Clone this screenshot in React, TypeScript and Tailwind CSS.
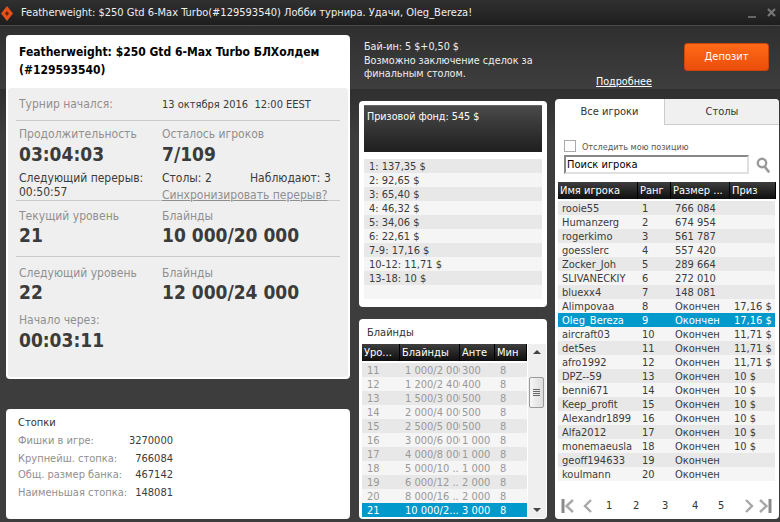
import React from "react";

const font = "font-['DejaVu_Sans_Condensed','DejaVu_Sans',sans-serif]";

const prizes = ["1: 137,35 $", "2: 92,65 $", "3: 65,40 $", "4: 46,32 $", "5: 34,06 $", "6: 22,61 $", "7-9: 17,16 $", "10-12: 11,71 $", "13-18: 10 $", ""];

const blinds = [
  ["11", "1 000/2 000", "300", "8"],
  ["12", "1 200/2 400", "400", "8"],
  ["13", "1 500/3 000", "500", "8"],
  ["14", "2 000/4 000", "500", "8"],
  ["15", "2 500/5 000", "500", "8"],
  ["16", "3 000/6 000", "1 000", "8"],
  ["17", "4 000/8 000", "1 000", "8"],
  ["18", "5 000/10 ..", "1 000", "8"],
  ["19", "6 000/12 ..", "2 000", "8"],
  ["20", "8 000/16 ..", "2 000", "8"],
  ["21", "10 000/2...", "3 000", "8"],
];

const players = [
  ["rooie55", "1", "766 084", ""],
  ["Humanzerg", "2", "674 954", ""],
  ["rogerkimo", "3", "561 787", ""],
  ["goesslerc", "4", "557 420", ""],
  ["Zocker_Joh", "5", "289 664", ""],
  ["SLIVANECKIY", "6", "272 010", ""],
  ["bluexx4", "7", "148 081", ""],
  ["Alimpovaa", "8", "Окончен", "17,16 $"],
  ["Oleg_Bereza", "9", "Окончен", "17,16 $"],
  ["aircraft03", "10", "Окончен", "11,71 $"],
  ["det5es", "11", "Окончен", "11,71 $"],
  ["afro1992", "12", "Окончен", "11,71 $"],
  ["DPZ--59", "13", "Окончен", "10 $"],
  ["benni671", "14", "Окончен", "10 $"],
  ["Keep_profit", "15", "Окончен", "10 $"],
  ["Alexandr1899", "16", "Окончен", "10 $"],
  ["Alfa2012", "17", "Окончен", "10 $"],
  ["monemaeusla", "18", "Окончен", "10 $"],
  ["geoff194633", "19", "Окончен", ""],
  ["koulmann", "20", "Окончен", ""],
];

const Head = ({ w, children }: { w: string; children: React.ReactNode }) => (
  <div className={`${w} shrink-0 h-full border-r border-black pl-[2px] overflow-hidden whitespace-nowrap leading-[18px] text-white`}>{children}</div>
);

const Hr = () => <div className="h-[1px] bg-[#cbcbcb] ml-[8px] mr-[3px]" />;

const Label = ({ children }: { children: React.ReactNode }) => (
  <div className="text-[12px] leading-[15px] text-[#908f8f]">{children}</div>
);

const Big = ({ children }: { children: React.ReactNode }) => (
  <div className="text-[19px] leading-[22px] font-bold text-[#3b3b3b]">{children}</div>
);

export default function App() {
  return (
    <div className={`${font} w-[780px] h-[522px] overflow-hidden bg-[#3d3d3d] flex flex-col text-[#3b3b3b]`}>
      <div className="h-[26px] shrink-0 bg-gradient-to-b from-[#303030] to-[#1e1e1e] border-b border-[#4a4a4a] flex items-center text-[11px] text-[#eeeeee]">
        <svg width="12" height="15" viewBox="0 0 12 15" className="ml-[1px] mr-[8px] mt-[2px]">
          <path d="M6 0 L12 7.5 L6 15 L0 7.5 Z" fill="#e8501a" />
          <path d="M6 5 L8 7.5 L6 10 L4 7.5 Z" fill="#5a2a14" />
        </svg>
        <span className="whitespace-nowrap mt-[2px]">Featherweight: $250 Gtd 6-Max Turbo(#129593540) Лобби турнира. Удачи, Oleg_Bereza!</span>
        <div className="ml-auto flex items-center gap-[11px] pr-[4px]">
          <div className="w-[8px] h-[2px] bg-[#666666] mt-[8px]" />
          <svg width="9" height="9" viewBox="0 0 9 9"><path d="M1 1 L8 8 M8 1 L1 8" stroke="#777777" strokeWidth="2.2" /></svg>
        </div>
      </div>

      <div className="flex-1 flex relative min-h-0 bg-[linear-gradient(to_bottom,#2f2f2f_0px,#3e3e3e_63px,#2f2f2f_63px,#3d3d3d_110px)]">
        <div className="w-[359px] shrink-0 pl-[6px] pt-[9px] flex flex-col">
          <div className="w-[344px] h-[344px] bg-white rounded-[4px] px-[2px] pb-[2px] flex flex-col">
            <div className="h-[53px] shrink-0 pl-[11px] pt-[8px] text-[12px] leading-[18px] font-bold text-black">
              Featherweight: $250 Gtd 6-Max Turbo БЛХолдем<br />(#129593540)
            </div>
            <div className="flex-1 bg-[#efefef] rounded-[3px] pr-[5px]">
              <div className="flex h-[32px] pl-[11px] pt-[9px]">
                <div className="w-[143px] text-[12px] leading-[15px] text-[#908f8f]">Турнир начался:</div>
                <div className="text-[11px] leading-[15px]">13 октября 2016&nbsp;&nbsp;12:00 EEST</div>
              </div>
              <Hr />
              <div className="flex h-[79px] pl-[11px] pt-[6px]">
                <div className="w-[143px]">
                  <Label>Продолжительность</Label>
                  <div className="mt-[1px]"><Big>03:04:03</Big></div>
                  <div className="text-[12px] leading-[15px] mt-[6px]">Следующий перерыв:</div>
                  <div className="text-[12px] leading-[13px]">00:50:57</div>
                </div>
                <div className="flex-1">
                  <Label>Осталось игроков</Label>
                  <div className="mt-[1px]"><Big>7/109</Big></div>
                  <div className="flex text-[12px] leading-[15px] mt-[6px]">
                    <div className="w-[88px]">Столы: 2</div>
                    <div>Наблюдают: 3</div>
                  </div>
                  <div className="text-[12px] leading-[14px] text-[#908f8f] underline mt-[2px]">Синхронизировать перерыв?</div>
                </div>
              </div>
              <Hr />
              <div className="flex h-[55px] pl-[11px] pt-[8px]">
                <div className="w-[143px]">
                  <Label>Текущий уровень</Label>
                  <Big>21</Big>
                </div>
                <div>
                  <Label>Блайнды</Label>
                  <Big>10 000/20 000</Big>
                </div>
              </div>
              <Hr />
              <div className="flex pl-[11px] pt-[9px]">
                <div className="w-[143px]">
                  <Label>Следующий уровень</Label>
                  <Big>22</Big>
                </div>
                <div>
                  <Label>Блайнды</Label>
                  <Big>12 000/24 000</Big>
                </div>
              </div>
              <div className="pl-[11px] pt-[10px]">
                <Label>Начало через:</Label>
                <div className="mt-[1px]"><Big>00:03:11</Big></div>
              </div>
            </div>
          </div>
          <div className="w-[344px] h-[110px] mt-[30px] bg-white rounded-[4px] pl-[12px] pt-[7px] text-[11px]">
            <div className="leading-[14px] text-[#333333]">Стопки</div>
            {[
              ["Фишки в игре:", "3270000", "mt-[3px]"],
              ["Крупнейш. стопка:", "766084", "mt-[3px]"],
              ["Общ. размер банка:", "467142", "mt-[1px]"],
              ["Наименьшая стопка:", "148081", "mt-[3px]"],
            ].map(([k, v, m]) => (
              <div key={k} className={`flex w-[155px] justify-between leading-[15px] ${m}`}>
                <span className="text-[#908f8f]">{k}</span>
                <span>{v}</span>
              </div>
            ))}
          </div>
        </div>

        <div className="w-[196px] shrink-0 flex flex-col">
          <div className="h-[63px] shrink-0 text-[10.7px] leading-[13.5px] text-[#eeeeee] pl-[5px] pt-[14px] w-[190px]">
            Бай-ин: 5 $+0,50 $<br />Возможно заключение сделок за финальным столом.
          </div>
          <div className="w-[188px] h-[206px] mt-[12px] bg-white rounded-[4px] px-[5px] pt-[4px] text-[11px]">
            <div className="h-[47px] bg-gradient-to-b from-[#4a4a4a] to-[#1f1f1f] border-t border-[#666666] pl-[3px] pt-[4px] leading-[14px] text-[10.7px] text-white">Призовой фонд: 545 $</div>
            <div className="mt-[7px]">
              {prizes.map((p, i) => (
                <div key={i} className={`h-[14px] leading-[15px] pl-[5px] ${i % 2 === 0 ? "bg-[#e8e8e8]" : "bg-[#f5f5f5]"}`}>{p}</div>
              ))}
            </div>
          </div>
          <div className="w-[188px] h-[200px] mt-[12px] bg-white rounded-[4px] text-[11px] flex flex-col">
            <div className="h-[25px] shrink-0 pl-[8px] pt-[7px] leading-[14px] text-[#333333]">Блайнды</div>
            <div className="flex flex-1 min-h-0">
              <div className="w-[165px] ml-[3px] shrink-0">
                <div className="h-[17px] flex bg-gradient-to-b from-[#3f3f3f] to-[#0f0f0f]">
                  <Head w="w-[38px]">Уро...</Head>
                  <Head w="w-[60px]">Блайнды</Head>
                  <Head w="w-[35px]">Анте</Head>
                  <Head w="w-[32px]">Мин</Head>
                </div>
                <div className="mt-[2px]">
                  {blinds.map((b, i) => (
                    <div key={b[0]} className={`h-[14px] leading-[15px] flex ${i === 10 ? "bg-[#0099cc] text-white" : `text-[#999999] ${i % 2 === 0 ? "bg-[#e8e8e8]" : "bg-[#f5f5f5]"}`}`}>
                      <div className="w-[38px] pl-[5px] shrink-0">{b[0]}</div>
                      <div className="w-[60px] pl-[5px] shrink-0 overflow-hidden whitespace-nowrap">{b[1]}</div>
                      <div className="w-[35px] pl-[2px] shrink-0 whitespace-nowrap">{b[2]}</div>
                      <div className="w-[32px] pl-[5px] shrink-0">{b[3]}</div>
                    </div>
                  ))}
                </div>
              </div>
              <div className="w-[18px] ml-[1px] mb-[1px] bg-[#efefef] relative flex flex-col items-center justify-between py-[6px]">
                <div className="w-0 h-0 border-x-[4px] border-x-transparent border-b-[4px] border-b-[#444444]" />
                <div className="absolute top-[33px] left-[1px] w-[15px] h-[31px] rounded-[2px] border border-[#9a9a9a] bg-gradient-to-r from-[#f6f6f6] to-[#dddddd] flex flex-col items-center justify-center gap-[1px]">
                  <div className="w-[7px] h-[1px] bg-[#666666]" />
                  <div className="w-[7px] h-[1px] bg-[#666666]" />
                  <div className="w-[7px] h-[1px] bg-[#666666]" />
                  <div className="w-[7px] h-[1px] bg-[#666666]" />
                </div>
                <div className="w-0 h-0 border-x-[4px] border-x-transparent border-t-[4px] border-t-[#444444]" />
              </div>
            </div>
          </div>
        </div>

        <div className="flex-1 flex flex-col pr-[3px]">
          <div className="h-[63px] shrink-0 flex relative text-[11px] text-[#eeeeee]">
            <a className="absolute left-[41px] top-[49px] leading-[13px] text-[10.7px] underline text-white">Подробнее</a>
            <button className="absolute left-[129px] top-[17px] w-[85px] h-[28px] rounded-[3px] border border-[#c9450c] bg-gradient-to-b from-[#ff6a16] to-[#ea4d0a] text-white text-[11px]">Депозит</button>
          </div>
          <div className="h-[420px] mt-[10px] bg-white rounded-[4px] text-[11px] flex flex-col">
            <div className="h-[26px] flex text-[11px] text-[#333333]">
              <div className="w-[110px] flex items-center justify-center border-r border-[#cccccc] pt-[1px]">Все игроки</div>
              <div className="flex-1 flex items-center justify-center bg-[#f0f0f0] border-b border-[#cccccc] rounded-tr-[4px] pt-[1px]">Столы</div>
            </div>
            <div className="h-[57px] pl-[9px] pt-[15px]">
              <div className="flex items-center gap-[6px] h-[12px]">
                <div className="w-[12px] h-[12px] border border-[#aaaaaa] bg-white" />
                <span className="text-[9px] text-[#555555] leading-[14px] mt-[1px]">Отследить мою позицию</span>
              </div>
              <div className="flex items-center mt-[3px]">
                <input readOnly value="Поиск игрока" className="w-[185px] h-[19px] border-2 border-[#888888] border-r-[#e0e0e0] border-b-[#e0e0e0] bg-white text-black text-[11px] pl-[1px] outline-none" />
                <svg width="14" height="16" viewBox="0 0 14 16" className="ml-[7px]">
                  <circle cx="6" cy="6" r="4.2" fill="none" stroke="#9a9a9a" strokeWidth="2.4" />
                  <path d="M9 10 L12.5 14.5" stroke="#9a9a9a" strokeWidth="2.8" strokeLinecap="round" />
                </svg>
              </div>
            </div>
            <div className="mx-[3px] h-[17px] flex bg-gradient-to-b from-[#3f3f3f] to-[#0f0f0f] text-[11px]">
              <Head w="w-[80px]">Имя игрока</Head>
              <Head w="w-[33px]">Ранг</Head>
              <Head w="w-[59px]">Размер ...</Head>
              <Head w="w-[46px]">Приз</Head>
            </div>
            <div className="mx-[3px] mr-[4px] mt-[2px]">
              {players.map((p, i) => (
                <div key={p[0]} className={`h-[14px] leading-[15px] flex ${i === 8 ? "bg-[#0099cc] text-white" : i % 2 === 0 ? "bg-[#e8e8e8]" : "bg-[#f5f5f5]"}`}>
                  <div className="w-[80px] pl-[4px] shrink-0 whitespace-nowrap overflow-hidden">{p[0]}</div>
                  <div className="w-[33px] pl-[4px] shrink-0">{p[1]}</div>
                  <div className="w-[59px] pl-[4px] shrink-0">{p[2]}</div>
                  <div className="pl-[4px] whitespace-nowrap">{p[3]}</div>
                </div>
              ))}
            </div>
            <div className="flex items-center mt-[16px] pl-[6px] h-[18px] text-[11px] text-[#333333]">
              <svg width="14" height="16" viewBox="0 0 14 16"><path d="M2 1 V15" stroke="#8a8a8a" strokeWidth="3" /><path d="M12 2 L5.5 8 L12 14" fill="none" stroke="#a8a8a8" strokeWidth="2.4" /></svg>
              <svg width="10" height="16" viewBox="0 0 10 16" className="ml-[8px]"><path d="M8 2 L2 8 L8 14" fill="none" stroke="#a8a8a8" strokeWidth="2.4" /></svg>
              <span className="ml-[13px] w-[27px]">1</span>
              <span className="w-[29px]">2</span>
              <span className="w-[30px]">3</span>
              <span className="w-[26px]">4</span>
              <span className="w-[24px]">5</span>
              <svg width="10" height="16" viewBox="0 0 10 16" className="ml-[2px]"><path d="M2 2 L8 8 L2 14" fill="none" stroke="#a8a8a8" strokeWidth="2.4" /></svg>
              <svg width="14" height="16" viewBox="0 0 14 16" className="ml-[4px]"><path d="M2 2 L8.5 8 L2 14" fill="none" stroke="#a8a8a8" strokeWidth="2.4" /><path d="M12 1 V15" stroke="#8a8a8a" strokeWidth="3" /></svg>
            </div>
          </div>
        </div>
      </div>
    </div>
  );
}
